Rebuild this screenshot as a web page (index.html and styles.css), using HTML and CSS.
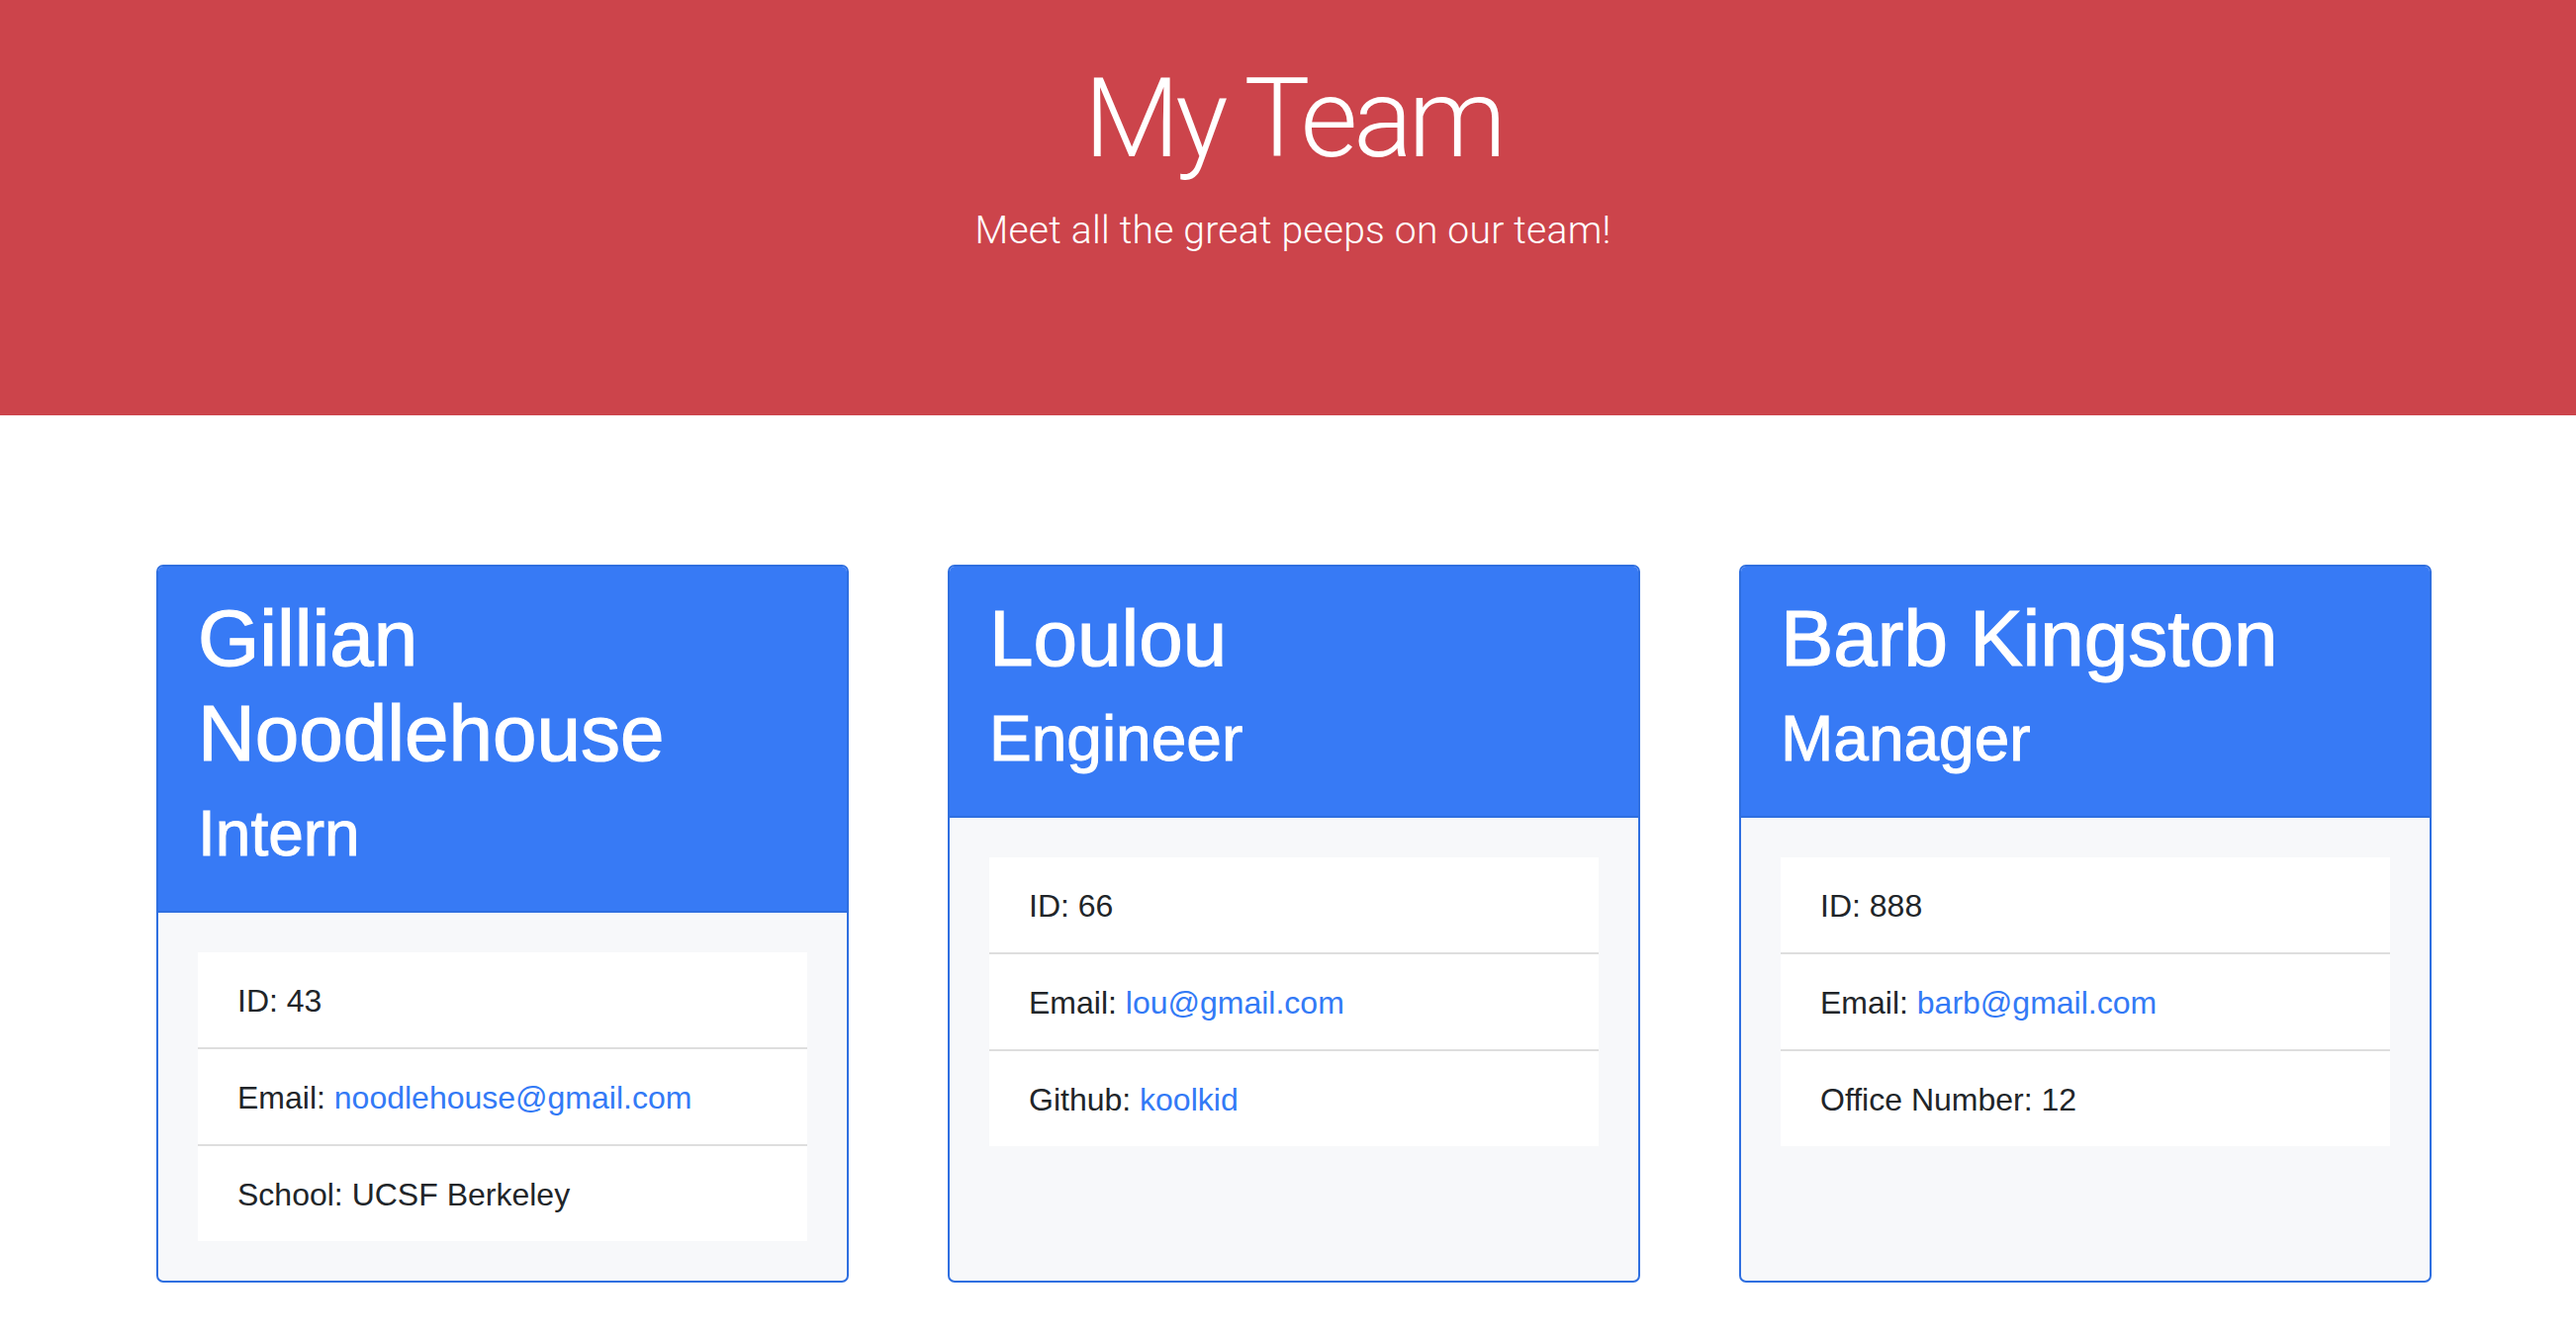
FILE: index.html
```html
<!DOCTYPE html>
<html lang="en">
<head>
<meta charset="utf-8">
<title>My Team</title>
<link rel="stylesheet" href="styles.css">
</head>
<body>
<header class="hero">
  <h1 class="hero-title">My Team</h1>
  <p class="hero-lead">Meet all the great peeps on our team!</p>
</header>
<main class="team">
  <section class="card">
    <div class="card-header">
      <h2 class="card-name">Gillian Noodlehouse</h2>
      <h3 class="card-role">Intern</h3>
    </div>
    <div class="card-body">
      <ul class="info-list">
        <li class="info-item">ID: 43</li>
        <li class="info-item">Email: <a class="info-link" href="mailto:noodlehouse@gmail.com">noodlehouse@gmail.com</a></li>
        <li class="info-item">School: UCSF Berkeley</li>
      </ul>
    </div>
  </section>
  <section class="card">
    <div class="card-header">
      <h2 class="card-name">Loulou</h2>
      <h3 class="card-role">Engineer</h3>
    </div>
    <div class="card-body">
      <ul class="info-list">
        <li class="info-item">ID: 66</li>
        <li class="info-item">Email: <a class="info-link" href="mailto:lou@gmail.com">lou@gmail.com</a></li>
        <li class="info-item">Github: <a class="info-link" href="#">koolkid</a></li>
      </ul>
    </div>
  </section>
  <section class="card">
    <div class="card-header">
      <h2 class="card-name">Barb Kingston</h2>
      <h3 class="card-role">Manager</h3>
    </div>
    <div class="card-body">
      <ul class="info-list">
        <li class="info-item">ID: 888</li>
        <li class="info-item">Email: <a class="info-link" href="mailto:barb@gmail.com">barb@gmail.com</a></li>
        <li class="info-item">Office Number: 12</li>
      </ul>
    </div>
  </section>
</main>
</body>
</html>
```
FILE: styles.css
```css
* {
  box-sizing: border-box;
}

html, body {
  margin: 0;
  padding: 0;
  background: #ffffff;
}

body {
  font-family: "Liberation Sans", Arial, sans-serif;
  font-size: 32px;
  line-height: 1.5;
  color: #212529;
}

.hero {
  height: 420px;
  background: #cc444b;
  color: #ffffff;
  text-align: center;
  padding-top: 53px;
  padding-left: 10px;
}

.hero-title {
  margin: 0;
  font-family: Roboto, "Liberation Sans", sans-serif;
  font-weight: 300;
  font-size: 112px;
  line-height: 1.2;
  letter-spacing: -4.5px;
}

.hero-lead {
  margin: 17px 0 0;
  font-family: Roboto, "Liberation Sans", sans-serif;
  font-weight: 300;
  font-size: 39px;
  line-height: 1.5;
  letter-spacing: 0.25px;
}

.team {
  display: grid;
  grid-template-columns: repeat(3, 700px);
  column-gap: 100px;
  padding: 151px 0 60px 158px;
  align-items: stretch;
}

.card {
  display: flex;
  flex-direction: column;
  border: 2px solid #2f6fe0;
  border-radius: 7px;
  overflow: hidden;
  background: #f7f8fa;
}

.card-header {
  background: #377af5;
  color: #ffffff;
  padding: 25px 40px 39px;
  border-bottom: 2px solid #2f6fe0;
}

.card-name {
  margin: 0 0 15px;
  font-size: 80px;
  font-weight: 500;
  line-height: 96px;
  -webkit-text-stroke: 1.2px #ffffff;
}

.card-role {
  margin: 0;
  font-size: 64px;
  font-weight: 500;
  line-height: 76.8px;
  -webkit-text-stroke: 1px #ffffff;
}

.card-body {
  flex: 1;
  padding: 40px;
}

.info-list {
  list-style: none;
  margin: 0;
  padding: 0;
  background: #ffffff;
}

.info-item {
  padding: 25px 40px 23px;
  line-height: 48px;
  border-bottom: 2px solid #dedede;
}

.info-item:last-child {
  border-bottom: none;
}

.info-link {
  color: #337af6;
  text-decoration: none;
}
```
